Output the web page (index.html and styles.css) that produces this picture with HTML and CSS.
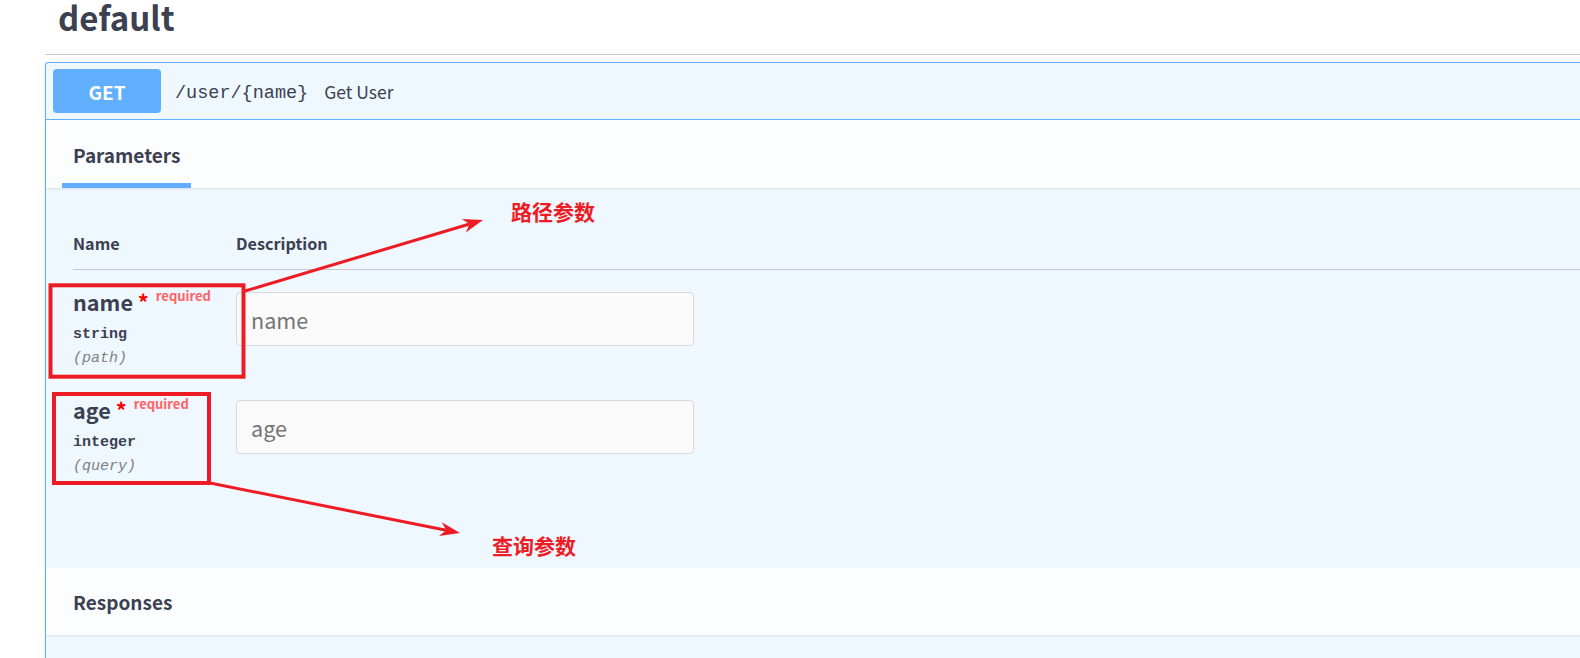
FILE: index.html
```html
<!DOCTYPE html>
<html lang="zh-CN">
<head>
<meta charset="utf-8">
<title>default</title>
<link rel="stylesheet" href="styles.css">
</head>
<body>
<div class="page">
  <section class="tag">
    <h3 class="tag-title">default</h3>
    <div class="opblock">
      <div class="summary">
        <span class="method">GET</span>
        <span class="path">/user/{name}</span>
        <span class="summary-desc">Get User</span>
      </div>
      <div class="tab-header">
        <div class="tab">Parameters</div>
      </div>
      <div class="params">
        <div class="row head">
          <div class="th">Name</div>
          <div class="th">Description</div>
        </div>
        <div class="row">
          <div class="name-cell">
            <div class="pname">name<span class="star">&nbsp;*</span><span class="req">required</span></div>
            <div class="ptype">string</div>
            <div class="pin">(path)</div>
          </div>
          <div class="desc-cell"><input class="field" type="text" placeholder="name"></div>
        </div>
        <div class="row">
          <div class="name-cell">
            <div class="pname">age<span class="star">&nbsp;*</span><span class="req">required</span></div>
            <div class="ptype">integer</div>
            <div class="pin">(query)</div>
          </div>
          <div class="desc-cell"><input class="field" type="text" placeholder="age"></div>
        </div>
      </div>
      <div class="responses-header">Responses</div>
      <div class="responses-body"></div>
    </div>
  </section>

  <svg class="annot" width="1580" height="658" viewBox="0 0 1580 658">
    <rect x="50.5" y="285.3" width="193" height="91.4" fill="none" stroke="#ed1c24" stroke-width="4"/>
    <rect x="54" y="394" width="155" height="89" fill="none" stroke="#ed1c24" stroke-width="4"/>
    <line x1="245" y1="291" x2="469.6" y2="224" stroke="#ed1c24" stroke-width="3"/>
    <polygon points="483,220 465.8,232.4 469.6,224 461.8,219" fill="#ed1c24"/>
    <line x1="210" y1="483" x2="446.3" y2="530.3" stroke="#ed1c24" stroke-width="3"/>
    <polygon points="460,533 439,536 446.3,530.3 441.8,522.2" fill="#ed1c24"/>
    <text class="label" x="511" y="220">路径参数</text>
    <text class="label" x="492" y="554">查询参数</text>
  </svg>
</div>
</body>
</html>
```
FILE: styles.css
```css
html, body {
  margin: 0;
  padding: 0;
  overflow: hidden;
  background: #ffffff;
}

.page {
  position: relative;
  width: 1680px;
  height: 658px;
  font-family: "Noto Sans CJK SC", "Noto Sans", sans-serif;
  color: #3b4151;
}

.tag {
  margin-left: 45px;
}

.tag-title {
  margin: 0;
  padding: 0 0 19px 13px;
  font-size: 33px;
  line-height: 35px;
  font-weight: 700;
  border-bottom: 1px solid #c8c9cc;
}

.opblock {
  margin-top: 7px;
  border: 1px solid #61affe;
  border-right: none;
  border-radius: 4px 0 0 4px;
  background: #eff7ff;
  box-shadow: 0 0 3px rgba(0, 0, 0, 0.12);
}

.summary {
  display: flex;
  align-items: center;
  padding: 6px 7px;
  border-bottom: 1px solid #61affe;
}

.method {
  width: 108px;
  height: 44px;
  display: flex;
  align-items: center;
  justify-content: center;
  background: #61affe;
  color: #ffffff;
  border-radius: 4px;
  font-size: 19px;
  font-weight: 700;
}

.path {
  margin-left: 14px;
  padding-top: 5px;
  font-family: "Liberation Mono", "DejaVu Sans Mono", monospace;
  font-size: 18.5px;
  color: #3b4151;
}

.summary-desc {
  margin-left: 16px;
  font-size: 17.5px;
  color: #3b4151;
}

.tab-header {
  height: 68px;
  box-sizing: border-box;
  padding-left: 16px;
  background: #fbfdff;
  box-shadow: 0 1px 2px rgba(0, 0, 0, 0.1);
  display: flex;
}

.tab {
  box-sizing: border-box;
  height: 68px;
  padding: 21px 11px 0 11px;
  font-size: 19px;
  line-height: 28px;
  font-weight: 700;
  border-bottom: 5px solid #61affe;
}

.params {
  padding: 27px 0 82px 27px;
}

.row {
  display: grid;
  grid-template-columns: 163px 1fr;
  padding: 16px 0 9px 0;
}

.row.head {
  padding: 16px 0 14px 0;
  border-bottom: 1px solid #c5cad1;
}

.th {
  font-size: 16.2px;
  line-height: 24px;
  font-weight: 700;
}

.pname {
  font-size: 21.6px;
  line-height: 32px;
  font-weight: 700;
  white-space: nowrap;
}

.star {
  color: #ff0000;
  line-height: 1;
}

.req {
  font-size: 13px;
  line-height: 1;
  font-weight: 700;
  color: #ff6366;
  padding-left: 7px;
  vertical-align: 10px;
}

.ptype {
  margin-top: 7px;
  font-family: "Liberation Mono", "DejaVu Sans Mono", monospace;
  font-size: 15px;
  line-height: 20px;
  font-weight: 700;
}

.pin {
  margin-top: 4px;
  font-family: "Liberation Mono", "DejaVu Sans Mono", monospace;
  font-size: 15px;
  line-height: 20px;
  font-style: italic;
  color: #808080;
}

.field {
  display: block;
  margin-top: 6px;
  box-sizing: border-box;
  width: 458px;
  height: 54px;
  padding: 0 14px;
  border: 1px solid #d9d9d9;
  border-radius: 4px;
  background: #fafafa;
  font-family: "Noto Sans CJK SC", "Noto Sans", sans-serif;
  font-size: 21.6px;
  color: #3b4151;
  outline: none;
}

.field::placeholder {
  color: #757575;
}

.responses-header {
  box-sizing: border-box;
  height: 67px;
  padding: 20px 0 0 27px;
  font-size: 19px;
  line-height: 28px;
  font-weight: 700;
  background: #fbfdff;
  box-shadow: 0 1px 2px rgba(0, 0, 0, 0.1);
}

.responses-body {
  height: 60px;
}

.annot {
  position: absolute;
  top: 0;
  left: 0;
  pointer-events: none;
}

.label {
  font-family: "Noto Sans CJK SC", sans-serif;
  font-size: 21px;
  font-weight: 700;
  fill: #ed1c24;
}
```
